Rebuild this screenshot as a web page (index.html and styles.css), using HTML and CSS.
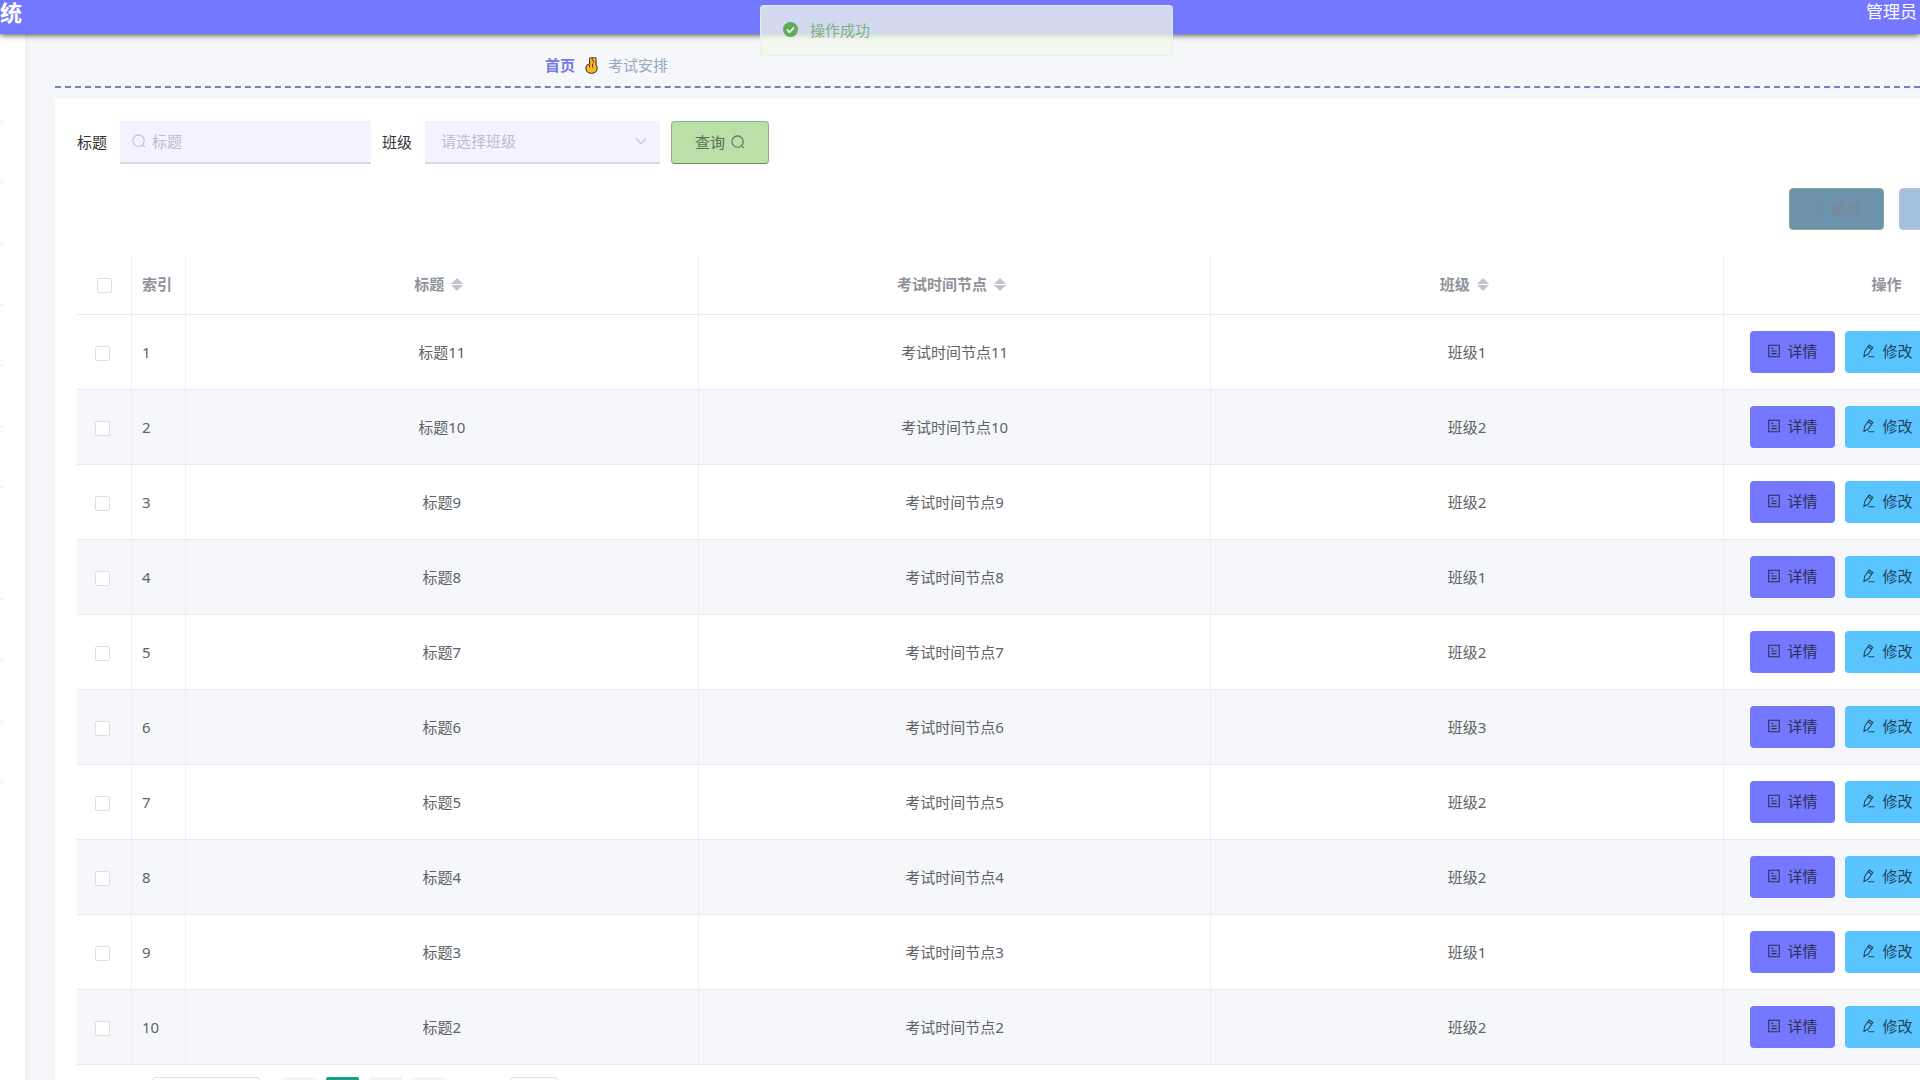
FILE: index.html
```html
<!DOCTYPE html>
<html lang="zh-CN">
<head>
<meta charset="utf-8">
<title>考试安排</title>
<link rel="stylesheet" href="styles.css">
</head>
<body>
<svg class="sprite" aria-hidden="true">
  <symbol id="i-search" viewBox="0 0 16 16"><circle cx="7.5" cy="7.5" r="6.500"/><path d="M11.8 12 14.5 15"/></symbol>
  <symbol id="i-detail" viewBox="0 0 16 16"><path d="M2 1.5h12v13H2zM5 5h2M5 8h6M5 11h6"/></symbol>
  <symbol id="i-edit" viewBox="0 0 16 16"><path d="M3 8.500 8.200 1.200 12.400 4 7.200 11.500 2.200 14.200zM7 3.200 11 6M7 14.500h7"/></symbol>
  <symbol id="i-plus" viewBox="0 0 16 16"><path d="M8 2v12M2 8h12"/></symbol>
  <symbol id="i-down" viewBox="0 0 16 16"><path d="M2 5l6 6 6-6"/></symbol>
</svg>
<header class="topbar"><h1 class="brand">统</h1><span class="user">管理员</span></header>
<div class="toast" role="status">
  <svg class="toast-icon" viewBox="0 0 16 16"><circle cx="8" cy="8" r="8"/><path d="M4.200 8.200 7 10.800 11.800 5.800"/></svg>
  <span>操作成功</span>
</div>
<div class="shell">
  <aside class="sidebar"><ul class="menu"><li></li><li></li><li></li><li></li><li></li><li></li><li></li><li class="tall"></li><li></li><li></li><li></li></ul></aside>
  <main class="main">
    <nav class="crumbs">
      <a href="#">首页</a>
      <svg class="hand" viewBox="0 0 13 17"><path d="M4.500 7V2.200a1.300 1.300 0 0 1 2.600-.4 1.600 1.600 0 0 1 4 .7L11 8l1 1.500V12c0 2.500-2 4.300-5.500 4.300S1 14.500 1 12V9.500Q1.500 7.500 4.500 7z"/><path class="crease" d="M7.200 2 9 5.500M4.500 7.500v3M7.500 6.500v4"/></svg>
      <span>考试安排</span>
    </nav>
    <section class="card">
      <form class="filters">
        <label for="q">标题</label>
        <div class="field field-text"><svg class="icon"><use href="#i-search"/></svg><input id="q" type="text" placeholder="标题"></div>
        <label for="cls">班级</label>
        <div class="field field-select"><select id="cls"><option>请选择班级</option></select><svg class="icon"><use href="#i-down"/></svg></div>
        <button class="btn btn-search" type="button">查询<svg class="icon"><use href="#i-search"/></svg></button>
      </form>
      <div class="toolbar">
        <button class="btn btn-add" type="button"><svg class="icon"><use href="#i-plus"/></svg>新增</button>
        <button class="btn btn-del" type="button" aria-label="删除"></button>
      </div>
      <table class="grid">
        <colgroup><col class="c-check"><col class="c-index"><col><col><col><col class="c-ops"></colgroup>
        <thead><tr>
          <th><input type="checkbox" aria-label="全选"></th><th class="left">索引</th>
          <th>标题<span class="sort"></span></th><th>考试时间节点<span class="sort"></span></th><th>班级<span class="sort"></span></th><th>操作</th>
        </tr></thead>
        <tbody id="rows"></tbody>
      </table>
      <div class="pager">
        <select class="size" aria-label="每页条数"></select>
        <div class="pages"><button type="button" aria-label="上一页"></button><button class="on" type="button" aria-label="第一页"></button><button type="button" aria-label="第二页"></button><button type="button" aria-label="下一页"></button></div>
        <input class="jump" type="text" aria-label="页码">
      </div>
    </section>
  </main>
</div>
<script src="rows.js"></script>
</body>
</html>
```
FILE: styles.css
```css
* { box-sizing: border-box; }
body {
  margin: 0;
  height: 100vh;
  display: flex;
  flex-direction: column;
  overflow: hidden;
  background: #f6f7fa;
  color: #606266;
  font: 15px/24px "Noto Sans", "Noto Sans CJK SC", sans-serif;
}
.sprite { display: none; }
button, input, select { font: inherit; color: inherit; margin: 0; }
.icon { width: 14px; height: 14px; flex: none; fill: none; stroke: currentColor; stroke-width: 1.200; }

.topbar {
  z-index: 1;
  flex: none;
  height: 34px;
  display: flex;
  justify-content: space-between;
  padding-right: 3px;
  background: #7478ff;
  color: #fff;
  box-shadow: 0 1px 6px rgba(0, 0, 0, .7);
}
.brand { margin: 0; font-size: 22px; line-height: 24px; }
.user { font-size: 17px; line-height: 24px; }

.toast {
  position: absolute;
  z-index: 2;
  top: 5px;
  left: 760px;
  width: 413px;
  height: 51px;
  display: flex;
  align-items: center;
  gap: 12px;
  padding: 0 22px 2px;
  border: 1px solid rgba(225, 243, 216, .76);
  border-radius: 4px;
  background: rgba(240, 249, 235, .76);
  color: #7db184;
}
.toast-icon { width: 15px; height: 15px; fill: #5fac58; }
.toast-icon path { fill: none; stroke: #e6f2e4; stroke-width: 2; }

.shell { flex: 1; min-height: 0; display: flex; overflow: hidden; }
.sidebar { flex: none; width: 28px; background: #fff; border-right: 3px solid #f1f1f2; }
.menu { width: 2px; margin: 0; padding: 27px 0 0; list-style: none; }
.menu li { height: 61px; border-bottom: 1px solid #e8e8ea; }
.menu .tall { height: 112px; }
.main { flex: 1; min-width: 0; padding-left: 27px; }
.crumbs {
  height: 54px;
  display: flex;
  align-items: center;
  gap: 10px;
  padding: 10px 0 0 490px;
  border-bottom: 2px dashed #7c7ccf;
  color: #97a8be;
}
.crumbs a { color: #7478e8; font-weight: 700; text-decoration: none; }
.hand { width: 13px; height: 17px; fill: #fdb32b; stroke: #33291b; }
.hand .crease { fill: none; stroke: #5a3c10; }

.card { width: calc(100% + 130px); margin-top: 11px; padding: 22px 0 0 22px; background: #fff; }
.filters { height: 43px; display: flex; align-items: center; color: #303133; }
.filters label { padding-bottom: 1px; }
.field { height: 43px; display: flex; align-items: center; margin: 0 11px 0 13px; padding-bottom: 2px; background: #f4f2ff; border-bottom: 2px solid #d8d7e0; color: #babdc8; }
.field-text { width: 251px; padding-left: 12px; gap: 6px; }
.field-select { width: 235px; padding-right: 12px; }
.field input, .field select { flex: 1; min-width: 0; height: 38px; padding: 0; border: 0; outline: 0; background: none; appearance: none; }
.field select { padding-left: 16px; }
.field input::placeholder { color: #babdc8; opacity: 1; }
.btn { height: 42px; display: inline-flex; align-items: center; justify-content: center; gap: 6px; padding: 0 0 2px; border: 1px solid; border-radius: 4px; color: #2b2d4c; }
.btn-search { width: 98px; height: 43px; background: #badfa7; border-color: #8fae84; border-bottom-color: #6f8b64; color: #5b6b55; }
.toolbar { display: flex; justify-content: flex-end; gap: 15px; margin-top: 24px; padding-right: 56px; }
.toolbar .btn { width: 95px; }
.btn-add { background: #6d92ab; border-color: #86ad94; color: #7c8793; }
.btn-del { background: #a3c1e0; border-color: #c6bfd0; }

.grid { width: 100%; margin-top: 25px; table-layout: fixed; border-collapse: separate; border-spacing: 0; }
.c-check { width: 55px; }
.c-index { width: 54px; }
.c-ops { width: 326px; }
.grid th, .grid td { padding: 0 10px; text-align: center; border-bottom: 1px solid #e8eaef; border-right: 1px solid #eef0f4; }
.grid th { height: 60px; color: #909399; font-weight: 700; padding-bottom: 2px; }
.grid td { height: 75px; padding-bottom: 1px; }
.grid tbody tr:nth-child(even) { background: #f5f7fb; }
.grid .left { text-align: left; }
.grid .ops { text-align: left; padding-left: 26px; }
.ops div { display: flex; gap: 10px; }
.ops .btn { width: 85px; border-color: transparent; }
.btn-detail { background: #7478ff; }
.btn-edit { background: #5ac4ff; color: #1f4460; }
.grid input { display: inline-block; width: 15px; height: 15px; vertical-align: middle; appearance: none; border: 1px solid #dcdfe6; border-radius: 2px; background: #fff; }
.grid td input { margin-right: 4px; }
.sort { display: inline-grid; gap: 1px; margin-left: 7px; margin-right: 6px; padding-bottom: 2px; vertical-align: middle; }
.sort::before, .sort::after { content: ""; border: 6px solid transparent; }
.sort::before { border-top: 0; border-bottom-color: #c0c4cc; }
.sort::after { border-bottom: 0; border-top-color: #c0c4cc; }

.pager { display: flex; padding: 12px 0 12px 75px; }
.size { width: 108px; height: 32px; border: 1px solid #dcdfe6; border-radius: 3px; background: #fff; appearance: none; }
.pages { display: flex; gap: 10px; margin: 0 65px 0 23px; }
.pages button { width: 33px; height: 32px; border: 0; border-radius: 2px; background: #f4f4f5; }
.pages .on { background: #16a085; }
.jump { width: 48px; height: 32px; border: 1px solid #dcdfe6; border-radius: 3px; }
```
FILE: rows.js
```js
const classes = [1, 2, 2, 1, 2, 3, 2, 2, 1, 2];
document.getElementById("rows").innerHTML = classes.map((c, i) => {
  const n = 11 - i;
  return `<tr>
    <td><input type="checkbox" aria-label="选择第${i + 1}行"></td>
    <td class="left">${i + 1}</td><td>标题${n}</td><td>考试时间节点${n}</td><td>班级${c}</td>
    <td class="ops"><div>
      <button class="btn btn-detail" type="button"><svg class="icon"><use href="#i-detail"/></svg>详情</button>
      <button class="btn btn-edit" type="button"><svg class="icon"><use href="#i-edit"/></svg>修改</button>
    </div></td>
  </tr>`;
}).join("");
```
